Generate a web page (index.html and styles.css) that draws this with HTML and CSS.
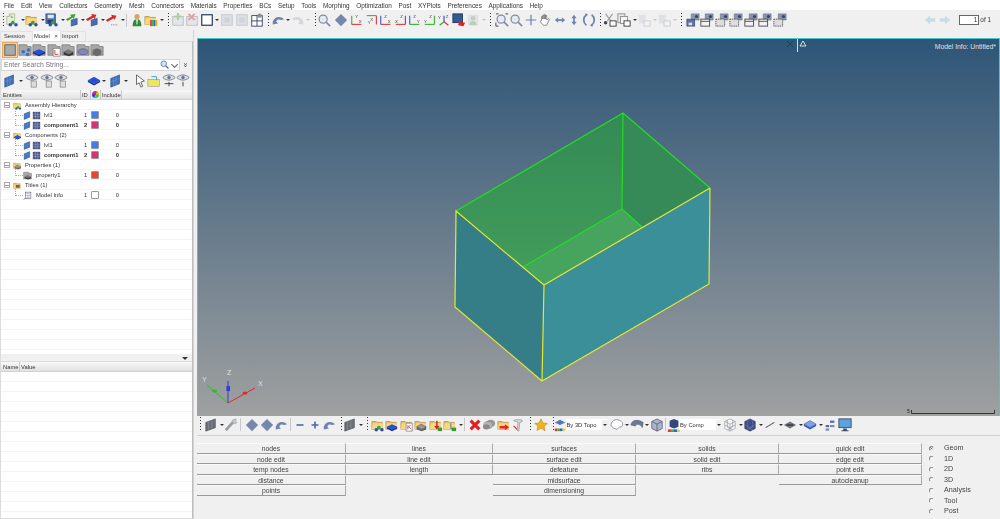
FILE: index.html
```html
<!DOCTYPE html>
<html lang="en">
<head>
<meta charset="utf-8">
<title>HyperMesh</title>
<link rel="stylesheet" href="styles.css">
</head>
<body>
<svg class="defs" aria-hidden="true">
<defs>
<symbol id="balls" viewBox="0 0 16 16"><circle cx="9" cy="11" r="2.200" fill="#3f9f3a"/><circle cx="12.500" cy="13.500" r="2" fill="#2a4fb0"/><circle cx="6" cy="13.500" r="2" fill="#2a4fb0"/></symbol>
<symbol id="folder" viewBox="0 0 16 16"><path d="M1 4h5l1 1h6v8H1z" fill="#e8c060" stroke="#a8832a" stroke-width=".7"/><path d="M2 6h12l-1 7H1z" fill="#f5d884"/></symbol>
<symbol id="f-green" viewBox="0 0 16 16"><use href="#folder"/><use href="#balls"/></symbol>
<symbol id="f-blue" viewBox="0 0 16 16"><use href="#folder"/><path d="M2 10l6-3 6 3-6 3z" fill="#2450d8"/><path d="M2 10v2l6 3 6-3v-2l-6 3z" fill="#12309a"/></symbol>
<symbol id="f-doc" viewBox="0 0 16 16"><use href="#folder"/><path d="M7 6h7v9H7z" fill="#fff" stroke="#667" stroke-width=".7"/><path d="M9 8v5m0-2l3-3m-2 2l3 3" stroke="#a33" stroke-width=".8" fill="none"/></symbol>
<symbol id="f-gear" viewBox="0 0 16 16"><use href="#folder"/><path d="M3 10l5-3 6 3-5 3z" fill="#999" stroke="#444" stroke-width=".6"/><path d="M3 10v3l6 2 5-2v-3l-5 3z" fill="#666"/></symbol>
<symbol id="f-red" viewBox="0 0 16 16"><use href="#folder"/><path d="M9 3v9" stroke="#c22" stroke-width="1.600"/><path d="M6 9l3 4 3-4z" fill="#c22"/><rect x="10" y="11" width="5" height="4" fill="#3a9a2a"/></symbol>
<symbol id="f-axis" viewBox="0 0 16 16"><use href="#folder"/><path d="M9 6v6h5" stroke="#36c" stroke-width="1" fill="none"/><rect x="10" y="11" width="5" height="4" fill="#3a9a2a"/></symbol>
<symbol id="f-arrow" viewBox="0 0 16 16"><use href="#folder"/><path d="M3 9h6V7l5 3.500-5 3.500v-2H3z" fill="#e22"/></symbol>
<symbol id="f-rain" viewBox="0 0 16 16"><use href="#folder"/><path d="M7 8h2v7H7z" fill="#e33"/><path d="M9 8h2v7H9z" fill="#3b3"/><path d="M11 8h2v7h-2z" fill="#26d"/><path d="M13 8h2v7h-2z" fill="#fa0"/></symbol>
<symbol id="open" viewBox="0 0 16 16"><path d="M2 4h3V1h6v7l-4 5H2z" fill="#e6efd8" stroke="#8fa67d" stroke-width=".7"/><path d="M6 2l4 3-3 1z" fill="#8fbf6a"/><use href="#balls"/></symbol>
<symbol id="save" viewBox="0 0 16 16"><rect x="1" y="1" width="11" height="11" fill="#4d6fa8" stroke="#2d4478" stroke-width=".7"/><rect x="3" y="2" width="7" height="4" fill="#dde6f4"/><rect x="3" y="8" width="6" height="4" fill="#25406f"/><use href="#balls"/></symbol>
<symbol id="imp-g" viewBox="0 0 16 16"><path d="M1 7l6-3-1-2 6-1-2 6-1-2-6 4z" fill="#3aa82a"/><path d="M7 8l7-2v7l-7 2z" fill="#4a6bb0" stroke="#2c4582" stroke-width=".5"/></symbol>
<symbol id="imp-r" viewBox="0 0 16 16"><path d="M1 7l7-4-1-2 6 1-2 5-1-2-7 4z" fill="#d52a2a"/><path d="M7 8l7-2v7l-7 2z" fill="#4a6bb0" stroke="#2c4582" stroke-width=".5"/></symbol>
<symbol id="imp-t" viewBox="0 0 16 16"><path d="M1 8l7-4-1-2 6 1-2 5-1-2-7 4z" fill="#d52a2a"/><path d="M7 13.500h8" stroke="#777" stroke-dasharray="1 1"/></symbol>
<symbol id="person" viewBox="0 0 16 16"><circle cx="8" cy="4" r="3" fill="#d9a267"/><path d="M3 15c0-6 2-8 5-8s5 2 5 8z" fill="#2e8b3a"/><path d="M7 7h2l-.5 6h-1z" fill="#e9e9e9"/></symbol>
<symbol id="add-f" viewBox="0 0 16 16"><rect x="2" y="4" width="12" height="10" fill="#e3e6e9" stroke="#b8bcc2"/><path d="M8 0v8M4 4h8" stroke="#a9cfa0" stroke-width="2.400"/></symbol>
<symbol id="del-f" viewBox="0 0 16 16"><rect x="2" y="4" width="12" height="10" fill="#e3e6e9" stroke="#b8bcc2"/><path d="M4 1l7 7m0-7L4 8" stroke="#e0a3a3" stroke-width="2.200"/></symbol>
<symbol id="rect" viewBox="0 0 16 16"><rect x="2" y="2" width="12" height="12" fill="#fff" stroke="#2f3d62" stroke-width="1.400"/></symbol>
<symbol id="pane-f" viewBox="0 0 16 16"><rect x="2" y="2" width="12" height="12" fill="#dbe0e6" stroke="#c3c7cd"/><rect x="5" y="5" width="6" height="6" fill="#cfd4db"/></symbol>
<symbol id="pane" viewBox="0 0 16 16"><rect x="2" y="3" width="12" height="12" fill="#fff" stroke="#2f3d62"/><path d="M8 3v12M2 9h12" stroke="#2f3d62"/><circle cx="11" cy="3" r="2.500" fill="#8a8f9a"/></symbol>
<symbol id="info" viewBox="0 0 16 16"><rect x="4" y="2" width="10" height="11" fill="#fff" stroke="#445" stroke-width=".9"/><path d="M6 5h6M6 8h6M6 11h6" stroke="#556" stroke-width=".8"/><path d="M1 15l3-2" stroke="#445"/></symbol>
<symbol id="undo" viewBox="0 0 16 16"><path d="M2 10C4 4 10 3 15 7l-3 1C9 7 7 7 6 10l2 2-6 1z" fill="#6f83ad"/></symbol>
<symbol id="redo-f" viewBox="0 0 16 16"><path d="M14 10C12 4 6 3 1 7l3 1c3-1 5-1 6 2l-2 2 6 1z" fill="#d2d5da"/></symbol>
<symbol id="zoom" viewBox="0 0 16 16"><circle cx="7" cy="7" r="4.600" fill="#e7e9f0" stroke="#7f8ca6" stroke-width="1.400"/><path d="M10 10l5 5" stroke="#7f8ca6" stroke-width="2"/></symbol>
<symbol id="dia-l" viewBox="0 0 16 16"><path d="M8 1L1 8l7 7 7-7z" fill="#7488ab"/></symbol>
<symbol id="dia-r" viewBox="0 0 16 16"><path d="M8 1l7 7-7 7-7-7z" fill="#7488ab"/></symbol>
<symbol id="ax-gr" viewBox="0 0 16 16"><path d="M2 3v10" stroke="#2eb02e" stroke-width="1.200"/><path d="M2 13h11" stroke="#e03333" stroke-width="1.200"/><text x="6" y="6" class="axt">Y</text><text x="10" y="11" class="axt">X</text></symbol>
<symbol id="ax-rg" viewBox="0 0 16 16"><path d="M13 3v10" stroke="#e03333" stroke-width="1.200"/><path d="M2 3h11" stroke="#2eb02e" stroke-width="1.200"/><text x="3" y="13" class="axt">Y</text><text x="6" y="9" class="axt">X</text></symbol>
<symbol id="ax-br" viewBox="0 0 16 16"><path d="M2 3v10" stroke="#3a50d8" stroke-width="1.200"/><path d="M2 13h11" stroke="#e03333" stroke-width="1.200"/><text x="6" y="6" class="axt">Z</text><text x="10" y="11" class="axt">X</text></symbol>
<symbol id="ax-rb" viewBox="0 0 16 16"><path d="M13 3v10" stroke="#3a50d8" stroke-width="1.200"/><path d="M2 13h11" stroke="#e03333" stroke-width="1.200"/><text x="7" y="6" class="axt">Z</text><text x="1" y="11" class="axt">X</text></symbol>
<symbol id="ax-bg" viewBox="0 0 16 16"><path d="M2 3v10" stroke="#3a50d8" stroke-width="1.200"/><path d="M2 13h11" stroke="#2eb02e" stroke-width="1.200"/><text x="6" y="6" class="axt">Z</text><text x="10" y="11" class="axt">Y</text></symbol>
<symbol id="ax-gb" viewBox="0 0 16 16"><path d="M13 3v10" stroke="#2eb02e" stroke-width="1.200"/><path d="M2 13h11" stroke="#2eb02e" stroke-width="1.200"/><text x="7" y="6" class="axt">Z</text><text x="1" y="11" class="axt">Y</text></symbol>
<symbol id="ax-3" viewBox="0 0 16 16"><path d="M8 3v7" stroke="#3a50d8" stroke-width="1.400"/><path d="M8 10l-5 4" stroke="#2eb02e" stroke-width="1.400"/><path d="M8 10l5 4" stroke="#e03333" stroke-width="1.400"/><text x="1" y="7" class="axt">Y</text><text x="10" y="6" class="axt">Z</text></symbol>
<symbol id="mon-r" viewBox="0 0 16 16"><rect x="1" y="1" width="11" height="10" fill="#2e5c94" stroke="#24364f"/><path d="M8 10l7 1-2 4-6-1z" fill="#e02222"/></symbol>
<symbol id="pers-f" viewBox="0 0 16 16"><rect x="2" y="2" width="12" height="12" fill="#dfe3e6"/><circle cx="8" cy="6" r="2.600" fill="#c4ccc0"/><path d="M4 14c0-4 2-5 4-5s4 1 4 5z" fill="#b9cfb9"/></symbol>
<symbol id="zoom-box" viewBox="0 0 16 16"><path d="M1 1h3M12 1h3M1 15h3" stroke="#333"/><path d="M1 11v4" stroke="#333"/><use href="#zoom"/></symbol>
<symbol id="cross" viewBox="0 0 16 16"><path d="M8 2v12M2 8h12" stroke="#6f83ad" stroke-width="1.400"/></symbol>
<symbol id="hand" viewBox="0 0 16 16"><path d="M4 8V4h1.500v3V2.500H7V7V2H8.500v5V3h1.500v5l1.500-1.500 1.500.5L10 14H6L2.500 9.500 4 8.500z" fill="#fff" stroke="#666" stroke-width=".8"/></symbol>
<symbol id="h-arrow" viewBox="0 0 16 16"><path d="M2 8l4-3v2h4V5l4 3-4 3V9H6v2z" fill="#6f83ad"/></symbol>
<symbol id="v-arrow" viewBox="0 0 16 16"><path d="M8 2l3 4H9v4h2l-3 4-3-4h2V6H5z" fill="#6f83ad"/></symbol>
<symbol id="rotate" viewBox="0 0 16 16"><path d="M5 2C1 5 1 11 5 14M11 2c4 3 4 9 0 12" fill="none" stroke="#6f83ad" stroke-width="2"/><path d="M4 0l3 2-3 2zM12 12l-3 2 3 2z" fill="#6f83ad"/></symbol>
<symbol id="cut" viewBox="0 0 16 16"><path d="M3 1l6 8M11 1L5 9" stroke="#9aa0a8" stroke-width="1.400"/><rect x="8" y="9" width="7" height="6" fill="#fff" stroke="#333"/><circle cx="3" cy="11" r="2" fill="#445"/></symbol>
<symbol id="copy" viewBox="0 0 16 16"><rect x="1" y="1" width="8" height="10" fill="#e9e9e9" stroke="#888"/><rect x="4" y="4" width="8" height="8" fill="#f6f6f6" stroke="#888"/><rect x="8" y="9" width="7" height="6" fill="#fff" stroke="#333"/></symbol>
<symbol id="copy-f" viewBox="0 0 16 16"><rect x="2" y="2" width="8" height="10" fill="#dfe1e4"/><rect x="8" y="9" width="7" height="6" fill="#f2f2f2" stroke="#c8cbd0"/></symbol>
<symbol id="cam-s" viewBox="0 0 16 16"><path d="M6 1h9v7H6z" fill="#8a94aa" stroke="#5f6a84" stroke-width=".6"/><circle cx="12" cy="4" r="1.800" fill="#344470"/><rect x="1" y="7" width="9" height="8" fill="#5a72a5" stroke="#33456f" stroke-width=".7"/><rect x="3" y="11" width="4" height="3" fill="#dde"/></symbol>
<symbol id="cam-a" viewBox="0 0 16 16"><path d="M6 1h9v7H6z" fill="#8a94aa" stroke="#5f6a84" stroke-width=".6"/><circle cx="12" cy="4" r="1.800" fill="#344470"/><rect x="1" y="7" width="10" height="8" fill="#f2f2f2" stroke="#444"/><path d="M1 9.500h10" stroke="#444"/></symbol>
<symbol id="cam-b" viewBox="0 0 16 16"><path d="M6 1h9v7H6z" fill="#8a94aa" stroke="#5f6a84" stroke-width=".6"/><circle cx="12" cy="4" r="1.800" fill="#344470"/><rect x="1" y="7" width="10" height="8" fill="#ddd" stroke="#444" stroke-dasharray="1.500 1"/></symbol>
<symbol id="arrow-f" viewBox="0 0 16 16"><path d="M8 3L2 8l6 5V10h6V6H8z" fill="#c4dde8"/></symbol>
<symbol id="arrow-fr" viewBox="0 0 16 16"><path d="M8 3l6 5-6 5V10H2V6h6z" fill="#c4dde8"/></symbol>
<symbol id="mat" viewBox="0 0 16 16"><rect x="2" y="2" width="12" height="12" fill="#a9a9a9" stroke="#5f5f5f" stroke-width="1"/></symbol>
<symbol id="box-g" viewBox="0 0 16 16"><path d="M1 2h9l1 2h4v10H1z" fill="#a7a7a7" stroke="#666" stroke-width=".7"/></symbol>
<symbol id="b-net" viewBox="0 0 16 16"><use href="#box-g"/><circle cx="6" cy="10" r="2" fill="#3a6dd0"/><circle cx="12" cy="8" r="2" fill="#3a6dd0"/><circle cx="11" cy="13" r="2" fill="#3a6dd0"/></symbol>
<symbol id="b-blue" viewBox="0 0 16 16"><use href="#box-g"/><path d="M1 10l7-3 7 3-7 3z" fill="#2450d8"/><path d="M1 10v2l7 3 7-3v-2l-7 3z" fill="#122f90"/></symbol>
<symbol id="b-doc" viewBox="0 0 16 16"><use href="#box-g"/><rect x="7" y="6" width="8" height="9" fill="#fff" stroke="#666" stroke-width=".7"/><path d="M9 8v5h4" stroke="#c33" fill="none"/></symbol>
<symbol id="b-gear" viewBox="0 0 16 16"><use href="#box-g"/><path d="M3 10l5-3 6 3-5 3z" fill="#777"/><path d="M3 10v3l6 2 5-2v-3l-5 3z" fill="#333"/></symbol>
<symbol id="b-disc" viewBox="0 0 16 16"><use href="#box-g"/><ellipse cx="8" cy="10" rx="6" ry="3.400" fill="#7f86b4" stroke="#565c88" stroke-width=".7"/></symbol>
<symbol id="b-nut" viewBox="0 0 16 16"><use href="#box-g"/><path d="M8 6l5 2v5l-5 2-5-2V8z" fill="#6f6a6a"/></symbol>
<symbol id="sheet" viewBox="0 0 16 16"><path d="M2 5l10-4v10L2 15z" fill="#3f70b8" stroke="#264c8c" stroke-width=".7"/><path d="M5 4v10M8 3v10M2 9l10-4" stroke="#7ea3da" stroke-width=".5"/></symbol>
<symbol id="grid" viewBox="0 0 16 16"><rect x="2" y="2" width="12" height="12" fill="#4e5f90" stroke="#2b3760"/><path d="M6 2v12M10 2v12M2 6h12M2 10h12" stroke="#a4b0d2" stroke-width=".7"/></symbol>
<symbol id="eye" viewBox="0 0 16 16"><path d="M1 4c4-4 10-4 14 0-4 4-10 4-14 0z" fill="#dfe3e9" stroke="#6d7687"/><circle cx="8" cy="4" r="2" fill="#6d7687"/></symbol>
<symbol id="eye-a" viewBox="0 0 16 16"><use href="#eye"/><rect x="7" y="8" width="6" height="7" fill="#ddd" stroke="#777" stroke-width=".7"/></symbol>
<symbol id="eye-b" viewBox="0 0 16 16"><use href="#eye"/><path d="M3 11h10M8 9v5" stroke="#333"/></symbol>
<symbol id="eye-c" viewBox="0 0 16 16"><use href="#eye"/><path d="M8 9v5" stroke="#333"/></symbol>
<symbol id="disc" viewBox="0 0 16 16"><path d="M1 7l7-4 7 4-7 4z" fill="#2450d8"/><path d="M1 7v2l7 4 7-4V7l-7 4z" fill="#122f90"/></symbol>
<symbol id="pointer" viewBox="0 0 16 16"><path d="M4 1v11l3-2 2 5 2-1-2-5 4-1z" fill="#fff" stroke="#333" stroke-width=".8"/></symbol>
<symbol id="mark" viewBox="0 0 16 16"><rect x="1" y="6" width="13" height="8" fill="#f0e560" stroke="#889" stroke-width=".6"/><path d="M5 3h6v4" fill="none" stroke="#2e9cc9"/></symbol>
<symbol id="glass" viewBox="0 0 16 16"><circle cx="6" cy="6" r="4.500" fill="#cfe2f5" stroke="#4f6c98" stroke-width="1.200"/><path d="M9.500 9.500l4 4" stroke="#4f6c98" stroke-width="2"/></symbol>
<symbol id="wrench" viewBox="0 0 16 16"><path d="M2 14L11 4" stroke="#9a9ea5" stroke-width="3"/><path d="M10 2l4-1-1 3 2 1-3 2-3-3z" fill="#c6c8cc" stroke="#8a8d93" stroke-width=".5"/></symbol>
<symbol id="minus" viewBox="0 0 16 16"><path d="M4 8h8" stroke="#4a66a5" stroke-width="1.800"/></symbol>
<symbol id="plus" viewBox="0 0 16 16"><path d="M4 8h8M8 4v8" stroke="#4a66a5" stroke-width="1.800"/></symbol>
<symbol id="hatch" viewBox="0 0 16 16"><path d="M2 5l11-4v10L2 15z" fill="#6b7076" stroke="#3b3f45" stroke-width=".6"/><path d="M5 4v10M9 3v10" stroke="#a0a4a9" stroke-width=".5"/></symbol>
<symbol id="x-red" viewBox="0 0 16 16"><path d="M3 3l10 10M13 3L3 13" stroke="#e02020" stroke-width="3.600"/></symbol>
<symbol id="stack" viewBox="0 0 16 16"><ellipse cx="10" cy="6" rx="5" ry="4" fill="#9a9a9a"/><ellipse cx="7" cy="8" rx="5" ry="4" fill="#b5b5b5" stroke="#777" stroke-width=".6"/><ellipse cx="5" cy="10" rx="4" ry="3" fill="#8b8b8b"/></symbol>
<symbol id="wrong" viewBox="0 0 16 16"><path d="M3 3l5 2-1 9 2 1 1-10 3-1-1-2H5z" fill="#d9d9d9" stroke="#777" stroke-width=".6"/><path d="M3 9l4 4" stroke="#d33" stroke-width="1.500"/></symbol>
<symbol id="star" viewBox="0 0 16 16"><path d="M8 1l2.200 4.700 5 .6-3.700 3.400 1 5L8 11.500l-4.500 2.700 1-5L.8 6.300l5-.6z" fill="#f2b515" stroke="#a87a08" stroke-width=".6"/></symbol>
<symbol id="topo" viewBox="0 0 16 16"><path d="M2 5l6-3 6 3-6 3z" fill="#5a74b5"/><rect x="2" y="12" width="3" height="3" fill="#e33"/><rect x="5" y="12" width="3" height="3" fill="#3b3"/><rect x="8" y="12" width="3" height="3" fill="#26d"/><rect x="11" y="12" width="3" height="3" fill="#ec3"/></symbol>
<symbol id="comp" viewBox="0 0 16 16"><path d="M3 3l5-2 5 2v7l-5 2-5-2z" fill="#33477a"/><rect x="1" y="13" width="3.500" height="3" fill="#e33"/><rect x="4.500" y="13" width="3.500" height="3" fill="#3b3"/><rect x="8" y="13" width="3.500" height="3" fill="#26d"/><rect x="11.500" y="13" width="3.500" height="3" fill="#ec3"/></symbol>
<symbol id="curve" viewBox="0 0 16 16"><path d="M1 8C2 2 8 0 13 4c3 3 1 7-2 6l-3 3C5 12 2 11 1 8z" fill="#fff" stroke="#7c8088" stroke-width=".9"/></symbol>
<symbol id="shell" viewBox="0 0 16 16"><path d="M1 8C2 2 9 1 15 5l-1 6c-2-4-6-5-8-2z" fill="#6a7998" stroke="#444c63" stroke-width=".6"/></symbol>
<symbol id="cube" viewBox="0 0 16 16"><path d="M8 1l6 3v8l-6 3-6-3V4z" fill="#aab3c8" stroke="#4a5470" stroke-width=".8"/><path d="M2 4l6 3 6-3M8 7v8" stroke="#4a5470" stroke-width=".8" fill="none"/></symbol>
<symbol id="wire" viewBox="0 0 16 16"><path d="M8 1l6 3v8l-6 3-6-3V4zM2 4l6 3 6-3M8 7v8M5 2.500v8l6 3M11 2.500v8l-6 3M2 8l6 3 6-3" fill="#f6f6f6" stroke="#7d838f" stroke-width=".6"/></symbol>
<symbol id="solid" viewBox="0 0 16 16"><path d="M8 1l6 3v8l-6 3-6-3V4z" fill="#3e4e86" stroke="#273258" stroke-width=".6"/><path d="M5 2.500v8l6 3M11 2.500v8l-6 3M2 8l6 3 6-3" fill="none" stroke="#7b89b8" stroke-width=".5"/></symbol>
<symbol id="line" viewBox="0 0 16 16"><path d="M3 11L13 5" stroke="#4d5563" stroke-width="1.200"/></symbol>
<symbol id="disc-g" viewBox="0 0 16 16"><path d="M1 8l7-4 7 4-7 4z" fill="#70757e"/><path d="M4 8h8" stroke="#444" stroke-width="2"/></symbol>
<symbol id="disc-b" viewBox="0 0 16 16"><path d="M1 7l7-4 7 4-7 4z" fill="#7ea3e8" stroke="#3558a8" stroke-width=".7"/><path d="M1 7v2l7 4 7-4V7l-7 4z" fill="#3558a8"/></symbol>
<symbol id="scatter" viewBox="0 0 16 16"><rect x="3" y="8" width="4" height="2.500" fill="#4f6da8"/><rect x="8" y="3" width="5" height="2.500" fill="#4f6da8"/><rect x="8" y="8" width="5" height="2.500" fill="#7d8ca8"/><rect x="3" y="12" width="4" height="2.500" fill="#7d8ca8"/></symbol>
<symbol id="monitor" viewBox="0 0 16 16"><rect x="1" y="1" width="14" height="10" fill="#5aa2e0" stroke="#3a4a66"/><path d="M6 12h4v2h2v1H4v-1h2z" fill="#3a4a66"/></symbol>
<symbol id="f-small" viewBox="0 0 16 16"><use href="#folder"/><rect x="5" y="7" width="7" height="5" fill="#666"/></symbol>
</defs>
</svg>

<nav class="menubar soft">
<span>File</span><span>Edit</span><span>View</span><span>Collectors</span><span>Geometry</span><span>Mesh</span><span>Connectors</span><span>Materials</span><span>Properties</span><span>BCs</span><span>Setup</span><span>Tools</span><span>Morphing</span><span>Optimization</span><span>Post</span><span>XYPlots</span><span>Preferences</span><span>Applications</span><span>Help</span>
</nav>

<div class="topbar soft">
<div class="bar">
<i class="dots"></i>
<svg class="ic"><use href="#open"/></svg><b class="dd"></b>
<svg class="ic"><use href="#f-green"/></svg><b class="dd"></b>
<svg class="ic"><use href="#save"/></svg><b class="dd"></b>
<svg class="ic"><use href="#imp-g"/></svg><b class="dd"></b>
<svg class="ic"><use href="#imp-r"/></svg><b class="dd"></b>
<svg class="ic"><use href="#imp-t"/></svg><b class="dd"></b>
<i class="sep"></i>
<svg class="ic"><use href="#person"/></svg>
<svg class="ic"><use href="#f-rain"/></svg><b class="dd"></b>
<i class="dots"></i>
<svg class="ic"><use href="#add-f"/></svg>
<svg class="ic"><use href="#del-f"/></svg>
<svg class="ic"><use href="#rect"/></svg><b class="dd"></b>
<svg class="ic"><use href="#pane-f"/></svg>
<svg class="ic m1"><use href="#pane-f"/></svg>
<svg class="ic"><use href="#pane"/></svg>
<i class="dots"></i>
<svg class="ic"><use href="#undo"/></svg><b class="dd"></b>
<svg class="ic"><use href="#redo-f"/></svg><b class="dd fade"></b>
<i class="dots"></i>
<svg class="ic"><use href="#zoom"/></svg>
<svg class="ic m2"><use href="#dia-l"/></svg>
<svg class="ic m2"><use href="#ax-gr"/></svg>
<svg class="ic"><use href="#ax-rg"/></svg>
<svg class="ic"><use href="#ax-br"/></svg>
<svg class="ic"><use href="#ax-rb"/></svg>
<svg class="ic"><use href="#ax-bg"/></svg>
<svg class="ic"><use href="#ax-gb"/></svg>
<svg class="ic"><use href="#ax-3"/></svg>
<svg class="ic"><use href="#mon-r"/></svg>
<svg class="ic"><use href="#pers-f"/></svg><b class="dd fade"></b>
<i class="dots"></i>
<svg class="ic m2"><use href="#zoom-box"/></svg>
<svg class="ic"><use href="#zoom"/></svg>
<svg class="ic"><use href="#cross"/></svg>
<svg class="ic"><use href="#hand"/></svg>
<svg class="ic"><use href="#h-arrow"/></svg>
<svg class="ic"><use href="#v-arrow"/></svg>
<svg class="ic"><use href="#rotate"/></svg>
<i class="dots"></i>
<svg class="ic"><use href="#cut"/></svg>
<svg class="ic"><use href="#copy"/></svg><b class="dd"></b>
<svg class="ic"><use href="#copy-f"/></svg><b class="dd fade"></b>
<svg class="ic"><use href="#copy-f"/></svg><b class="dd fade"></b>
<i class="dots"></i>
<svg class="ic m2"><use href="#cam-s"/></svg>
<svg class="ic"><use href="#cam-a"/></svg>
<svg class="ic"><use href="#cam-b"/></svg>
<svg class="ic"><use href="#cam-b"/></svg>
<svg class="ic"><use href="#cam-a"/></svg>
<svg class="ic"><use href="#cam-a"/></svg>
<svg class="ic"><use href="#cam-b"/></svg>
<div class="pager">
<svg class="ic"><use href="#arrow-f"/></svg>
<svg class="ic"><use href="#arrow-fr"/></svg>
<span class="pageno">1</span><span>of 1</span>
</div>
</div>
</div>

<div class="main">
<aside class="left soft">
<div class="tabs"><span class="tab t1">Session</span><span class="tab on">Model <em>×</em></span><span class="tab t3">Import</span></div>
<div class="browser">
<div class="brow tools1">
<svg class="ic picked"><use href="#mat"/></svg>
<svg class="ic"><use href="#b-net"/></svg>
<svg class="ic"><use href="#b-blue"/></svg>
<svg class="ic"><use href="#b-doc"/></svg>
<svg class="ic"><use href="#b-gear"/></svg>
<svg class="ic"><use href="#b-disc"/></svg>
<svg class="ic"><use href="#b-nut"/></svg>
</div>
<div class="search">
<div class="field"><span>Enter Search String...</span><svg class="ic glass"><use href="#glass"/></svg><b class="chev"></b></div>
<span class="dbl">»</span>
</div>
<div class="brow tools2">
<svg class="ic"><use href="#sheet"/></svg><b class="dd"></b>
<svg class="ic m2"><use href="#eye-a"/></svg>
<svg class="ic"><use href="#eye-a"/></svg>
<svg class="ic"><use href="#eye-a"/></svg>
<i class="gapw"></i>
<svg class="ic"><use href="#disc"/></svg><b class="dd"></b>
<svg class="ic m2"><use href="#sheet"/></svg><b class="dd"></b>
<svg class="ic m4"><use href="#pointer"/></svg>
<svg class="ic"><use href="#mark"/></svg>
<svg class="ic"><use href="#eye-b"/></svg>
<svg class="ic"><use href="#eye-c"/></svg>
</div>
<div class="thead">
<span class="c-name">Entities</span><span class="c-id">ID</span><span class="c-col"><i class="wheel"></i></span><span class="c-inc">Include</span>
</div>
<div class="tree">
<div class="row"><span class="name lv0"><i class="exp"></i><svg class="ti"><use href="#f-green"/></svg>Assembly Hierarchy</span></div>
<div class="row"><span class="name lv1"><svg class="ti"><use href="#sheet"/></svg><svg class="ti"><use href="#grid"/></svg>lvl1</span><span class="id">1</span><i class="sw blue"></i><span class="inc">0</span></div>
<div class="row bold"><span class="name lv1"><svg class="ti"><use href="#sheet"/></svg><svg class="ti"><use href="#grid"/></svg>component1</span><span class="id">2</span><i class="sw pink"></i><span class="inc">0</span></div>
<div class="row"><span class="name lv0"><i class="exp"></i><svg class="ti"><use href="#f-blue"/></svg>Components (2)</span></div>
<div class="row"><span class="name lv1"><svg class="ti"><use href="#sheet"/></svg><svg class="ti"><use href="#grid"/></svg>lvl1</span><span class="id">1</span><i class="sw blue"></i><span class="inc">0</span></div>
<div class="row bold"><span class="name lv1"><svg class="ti"><use href="#sheet"/></svg><svg class="ti"><use href="#grid"/></svg>component1</span><span class="id">2</span><i class="sw pink"></i><span class="inc">0</span></div>
<div class="row"><span class="name lv0"><i class="exp"></i><svg class="ti"><use href="#f-gear"/></svg>Properties (1)</span></div>
<div class="row"><span class="name lv2"><svg class="ti"><use href="#b-gear"/></svg>property1</span><span class="id">1</span><i class="sw red"></i><span class="inc">0</span></div>
<div class="row"><span class="name lv0"><i class="exp"></i><svg class="ti"><use href="#f-small"/></svg>Titles (1)</span></div>
<div class="row"><span class="name lv2"><svg class="ti"><use href="#info"/></svg>Model Info</span><span class="id">1</span><i class="sw white"></i><span class="inc">0</span></div>
</div>
<div class="split"><i class="tri"></i></div>
<div class="thead low"><span class="c-n2">Name</span><span>Value</span></div>
<div class="values"></div>
</div>
</aside>

<div class="work">
<section class="viewport">
<svg class="scene" viewBox="198 39 801 376">
<defs>
<linearGradient id="wall" x1="0" y1="0" x2="0" y2="1"><stop offset="0" stop-color="#338a55"/><stop offset="1" stop-color="#429c5a"/></linearGradient>
</defs>
<polygon points="456,211 623,113 622,209 523,267" fill="url(#wall)"/>
<polygon points="623,113 710,188 642,227 622,209" fill="#358a58"/>
<polygon points="523,267 622,209 642,227 544,285" fill="#46a45e"/>
<polygon points="456,211 544,285 542,381 455,307" fill="#357e88"/>
<polygon points="544,285 710,188 709,284 542,381" fill="#3a8f98"/>
<g class="edge-g"><path d="M456 211L623 113L710 188M623 113L622 209L523 267M622 209L642 227"/></g>
<g class="edge-y"><path d="M710 188L544 285L456 211L455 307L542 381L709 284L710 188M544 285L542 381"/></g>
<g class="triad">
<path d="M228 403L207 385" stroke="#22c422"/><path d="M228 403V381" stroke="#2a3fd8"/><path d="M228 403L255 388" stroke="#e02a2a"/>
<ellipse cx="214.500" cy="391" rx="2.500" ry="1.500" fill="#22c422"/><rect x="226.500" y="386" width="3.500" height="5" fill="#2a3fd8"/><ellipse cx="245" cy="393" rx="2.500" ry="1.500" fill="#e02a2a"/>
<text x="202" y="382">Y</text><text x="227" y="375">Z</text><text x="258" y="386">X</text>
</g>
<g class="cursor"><path d="M787 41l6 6m0-6l-6 6" stroke="#1f3f5f" fill="none"/><rect x="797" y="38" width="1" height="14" fill="#d6dde4"/><path d="M803 41l3 5h-6z" fill="none" stroke="#d8e0e6"/></g>
<g class="scalebar"><text x="907" y="413">5</text><path d="M911.500 410V413.500H994.500V410" fill="none" stroke="#333"/></g>
</svg>
<span class="info">Model Info: Untitled*</span>
</section>
<div class="bar lower soft">
<i class="dots"></i>
<svg class="ic m2"><use href="#hatch"/></svg><b class="dd"></b>
<svg class="ic"><use href="#wrench"/></svg>
<i class="sep"></i>
<svg class="ic m2"><use href="#dia-l"/></svg>
<svg class="ic"><use href="#dia-r"/></svg>
<svg class="ic"><use href="#undo"/></svg>
<i class="sep"></i>
<svg class="ic"><use href="#minus"/></svg>
<svg class="ic"><use href="#plus"/></svg>
<svg class="ic"><use href="#undo"/></svg>
<i class="dots"></i>
<svg class="ic"><use href="#hatch"/></svg><b class="dd"></b>
<i class="dots"></i>
<svg class="ic m1"><use href="#f-green"/></svg>
<svg class="ic"><use href="#f-blue"/></svg>
<svg class="ic"><use href="#f-doc"/></svg>
<svg class="ic"><use href="#f-gear"/></svg>
<svg class="ic"><use href="#f-red"/></svg>
<svg class="ic"><use href="#f-axis"/></svg><b class="dd"></b>
<i class="sep"></i>
<svg class="ic"><use href="#x-red"/></svg>
<svg class="ic"><use href="#stack"/></svg>
<svg class="ic"><use href="#f-arrow"/></svg>
<svg class="ic"><use href="#wrong"/></svg>
<i class="dots"></i>
<svg class="ic m2"><use href="#star"/></svg>
<i class="dots"></i>
<svg class="ic pull"><use href="#topo"/></svg>
<span class="combo">By 3D Topo<b class="dd inset"></b></span>
<svg class="ic"><use href="#curve"/></svg><b class="dd"></b>
<svg class="ic"><use href="#shell"/></svg><b class="dd"></b>
<svg class="ic"><use href="#cube"/></svg>
<i class="sep"></i>
<svg class="ic pull"><use href="#comp"/></svg>
<span class="combo">By Comp<b class="dd inset"></b></span>
<svg class="ic"><use href="#wire"/></svg><b class="dd"></b>
<svg class="ic"><use href="#solid"/></svg><b class="dd"></b>
<svg class="ic"><use href="#line"/></svg><b class="dd"></b>
<svg class="ic"><use href="#disc-g"/></svg><b class="dd"></b>
<svg class="ic"><use href="#disc-b"/></svg><b class="dd"></b>
<svg class="ic"><use href="#scatter"/></svg>
<svg class="ic"><use href="#monitor"/></svg>
</div>
<div class="panels soft">
<div class="grid">
<div class="col c1"><button>nodes</button><button>node edit</button><button>temp nodes</button><button>distance</button><button>points</button></div>
<div class="col c2"><button>lines</button><button>line edit</button><button>length</button></div>
<div class="col c3"><button>surfaces</button><button>surface edit</button><button>defeature</button><button>midsurface</button><button>dimensioning</button></div>
<div class="col c4"><button>solids</button><button>solid edit</button><button>ribs</button></div>
<div class="col c5"><button>quick edit</button><button>edge edit</button><button>point edit</button><button>autocleanup</button></div>
</div>
<div class="radios">
<label class="r on"><i></i>Geom</label><label class="r"><i></i>1D</label><label class="r"><i></i>2D</label><label class="r"><i></i>3D</label><label class="r"><i></i>Analysis</label><label class="r"><i></i>Tool</label><label class="r"><i></i>Post</label>
</div>
</div>
</div>
</div>
</body>
</html>
```
FILE: styles.css
```css
* { box-sizing: border-box; }
html, body { margin: 0; height: 100%; }
body {
  width: 1000px; height: 519px; overflow: hidden;
  display: flex; flex-direction: column;
  background: #f0f0f0; color: #333;
  font: 6.4px/10px "Liberation Sans", Arial, sans-serif;
}
.soft { filter: blur(.35px); }
.defs { position: absolute; width: 0; height: 0; }
.axt { font: 5px "Liberation Sans", sans-serif; fill: #444; }

.menubar { height: 10px; background: #fff; display: flex; gap: 6.7px; padding: 1px 0 0 4px; flex: none; }

.topbar { height: 20px; flex: none; background: #f0f0f0; }
.bar { display: flex; align-items: center; height: 20px; }
.ic { width: 14px; height: 14px; flex: none; margin-right: .5px; }
.m1 { margin-left: 1px; }
.m2 { margin-left: 2px; }
.m4 { margin-left: 4px; }
.pull { margin-left: -2px; margin-right: -1.500px; }
.dd { width: 5.500px; height: 10px; flex: none; position: relative; }
.dd::after { content: ""; position: absolute; left: 1px; top: 4px; border: 2px solid transparent; border-top: 2.500px solid #333; border-bottom: 0; }
.dd.fade::after { border-top-color: #c4c4c4; }
.dots { width: 1px; height: 15px; margin: 0 1.500px 0 2.500px; flex: none; background: repeating-linear-gradient(#333 0 1px, transparent 1px 3px); }
.bar > .dots ~ .dots { margin-left: 4px; }
.sep { width: 1px; height: 13px; margin: 0 2.500px 0 1px; flex: none; background: #c8c8c8; }
.pager { display: flex; align-items: center; margin-left: auto; padding-right: 9px; }
.pageno { width: 20px; height: 10px; margin: 0 1px 0 7px; background: #fff; border: 1px solid #666; text-align: right; line-height: 8px; padding-right: 1px; }

.main { flex: 1; display: flex; min-height: 0; }
.left { width: 193px; flex: none; display: flex; flex-direction: column; background: #f0f0f0; font-size: 5.800px; }
.tabs { height: 10px; display: flex; flex: none; align-items: flex-end; margin-top: 1px; }
.tab { height: 10px; background: #f0f0f0; border: 1px solid #e2e2e2; border-bottom: 0; line-height: 9px; flex: none; }
.t1 { width: 33px; padding-left: 3px; }
.t3 { width: 26px; padding-left: 1px; }
.tab.on { background: #fff; border-color: #fff; width: 27px; padding-left: 0; }
.tab em { font-style: normal; margin-left: 3px; }
.browser { flex: 1; display: flex; flex-direction: column; min-height: 0; border: 1px solid #dcdcdc; border-right-color: #bdbdbd; }
.brow { display: flex; align-items: center; flex: none; }
.tools1 { height: 16px; padding-left: 2px; }
.picked { background: #f9cf94; outline: 1px solid #e8a65a; }
.search { height: 13px; display: flex; align-items: center; flex: none; }
.field { width: 179px; height: 12px; background: #fff; border: 1px solid #d6d6d6; display: flex; align-items: center; padding-left: 2px; color: #777; font-size: 6.800px; }
.field span { flex: 1; }
.glass { width: 10px; height: 10px; margin-right: 2px; }
.chev { width: 7px; height: 10px; position: relative; }
.chev::after { content: ""; position: absolute; left: 0; top: 2px; width: 4px; height: 4px; border-right: 1px solid #666; border-bottom: 1px solid #666; transform: rotate(45deg); }
.dbl { margin-left: 3px; font-size: 8px; transform: rotate(90deg); }
.tools2 { height: 19px; padding-left: 2px; }
.gapw { width: 18px; flex: none; }
.thead { height: 10px; flex: none; display: flex; align-items: center; background: linear-gradient(#f8f8f8, #e2e2e2); border-bottom: 1px solid #d2d2d2; }
.thead span { border-right: 1px solid #c9c9c9; height: 10px; padding-left: 1px; }
.c-name { width: 80px; padding-left: 2px !important; }
.c-id { width: 10px; }
.c-col { width: 10px; display: flex; align-items: center; }
.c-inc { width: 21px; }
.wheel { display: block; width: 7px; height: 7px; border-radius: 50%; background: conic-gradient(#e22, #fc0, #2c2, #2cc, #22e, #c2c, #e22); }
.tree { height: 254px; flex: none; background: #fff repeating-linear-gradient(transparent 0 9px, #eef6f8 9px 10px); }
.row { height: 10px; display: grid; grid-template-columns: 83px 7px 10px 20px; align-items: center; }
.row.bold { font-weight: 700; }
.name { display: flex; align-items: center; white-space: nowrap; }
.lv0 { padding-left: 3px; grid-column: 1 / -1; }
.lv1, .lv2 { padding-left: 14px; }
.lv1::before, .lv2::before { content: ""; width: 7px; height: 6px; margin-top: -6px; border-left: 1px dotted #aaa; border-bottom: 1px dotted #aaa; flex: none; }
.lv1 .ti { margin-right: 0; }
.lv1 .ti:last-of-type { margin-right: 3px; }
.lv2 .ti { margin-right: 4px; }
.exp { width: 6px; height: 6px; border: 1px solid #aaa; margin-right: 3px; flex: none; background: linear-gradient(#999,#999) center/4px 1px no-repeat; }
.ti { width: 9px; height: 9px; flex: none; }
.lv0 .ti { margin-right: 3px; }
.sw { width: 8px; height: 8px; display: block; border: 1px solid #999; border-radius: 1px; }
.blue { background: #3f7fe8; } .pink { background: #d8337a; } .red { background: #f0442a; } .white { background: #fff; }
.inc { text-align: right; padding-right: 2px; }
.split { height: 8px; flex: none; position: relative; border-bottom: 1px solid #ddd; }
.tri { position: absolute; right: 4px; top: 3px; border: 3px solid transparent; border-top: 3px solid #333; border-bottom: 0; }
.low { height: 10px; }
.c-n2 { width: 19px; padding-left: 2px !important; }
.low span:last-child { border: 0; }
.values { flex: 1; background: #fff repeating-linear-gradient(transparent 0 9px, #eef6f8 9px 10px); }

.work { flex: 1; display: flex; flex-direction: column; padding: 8px 0 0 3px; border-left: 1px solid #d4d4d4; min-width: 0; }
.viewport { height: 378px; flex: none; position: relative; border: 1px solid #4cc4cc; background: linear-gradient(#2e5577, #9fa0a0); }
.scene { display: block; width: 100%; height: 100%; }
.edge-g path { fill: none; stroke: #1ee01e; stroke-width: 1.200; }
.edge-y path { fill: none; stroke: #e6e830; stroke-width: 1.200; }
.triad path { fill: none; }
.triad text { font: 7px "Liberation Sans", sans-serif; fill: #dfe3e6; }
.scalebar text { font: 5px "Liberation Sans", sans-serif; fill: #222; }
.info { position: absolute; right: 3px; top: 3px; color: #dde4ea; font-size: 6.800px; }
.lower { height: 19px; flex: none; padding-bottom: 2px; }
.combo { width: 42px; height: 11px; background: #fff; flex: none; display: flex; align-items: center; justify-content: space-between; padding-left: 1px; margin-right: 2px; font-size: 5.800px; }
.inset { background: #f0f0f0; }
.panels { flex: 1; display: flex; border-top: 1px solid #d0d0d0; padding: 7px 0 0 0; }
.grid { display: flex; width: 725px; flex: none; }
.c1 { width: 149px; } .c2 { width: 147px; } .c3 { width: 143px; } .c4 { width: 143px; } .c5 { width: 143px; }
.col { display: flex; flex-direction: column; }
.col button {
  height: 10.500px; padding: 0; margin: 0; font: inherit; font-size: 6.800px; color: #444; background: #f0f0f0;
  border: 0; border-top: 1px solid #fafafa; border-bottom: 1px solid #999; border-right: 1px solid #aaa;
}
.radios { margin-left: 5px; display: flex; flex-direction: column; }
.r { height: 10.500px; display: flex; align-items: center; gap: 10px; font-size: 7.200px; color: #444; }
.r i { width: 5px; height: 5px; border-radius: 50%; border: 1px solid #888; border-right-color: #eee; border-bottom-color: #eee; background: #fff; flex: none; margin-left: 2px; }
.r.on i { background: #333; box-shadow: inset 0 0 0 1px #fff; }
```
